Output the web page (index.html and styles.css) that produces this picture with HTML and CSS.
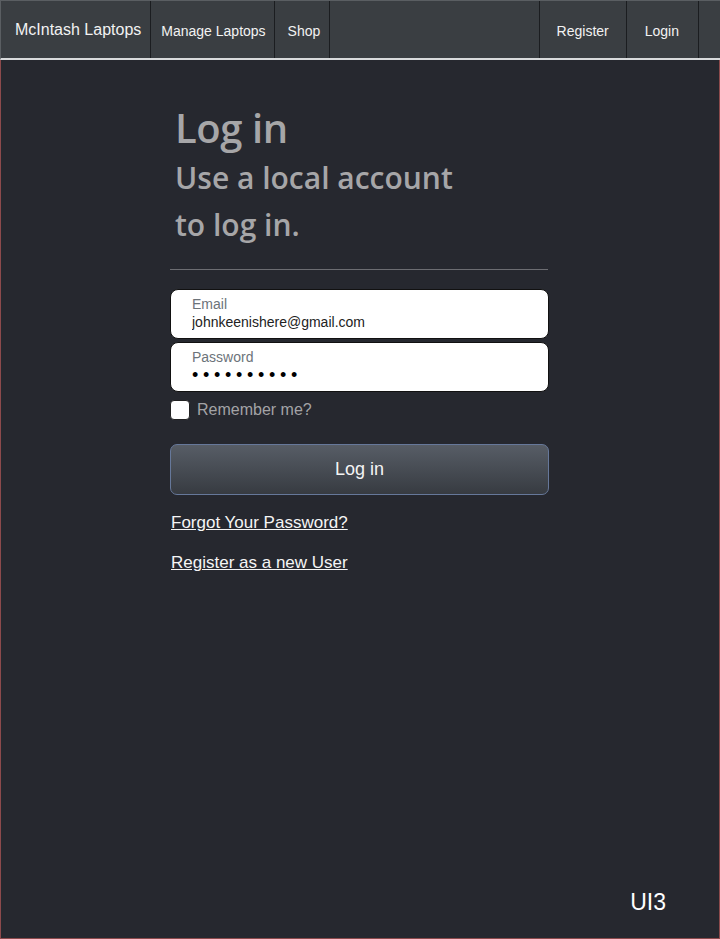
FILE: index.html
```html
<!DOCTYPE html>
<html lang="en">
<head>
<meta charset="utf-8">
<title>Log in - McIntash Laptops</title>
<link rel="stylesheet" href="styles.css">
</head>
<body>
<div class="page">
  <nav class="navbar">
    <a class="brand" href="#">McIntash Laptops</a>
    <a class="nav-item manage" href="#">Manage Laptops</a>
    <a class="nav-item shop" href="#">Shop</a>
    <span class="nav-fill"></span>
    <a class="nav-item right" href="#">Register</a>
    <a class="nav-item right login-link" href="#">Login</a>
    <span class="nav-end"></span>
  </nav>
  <main class="main">
    <section class="login">
      <h1 class="title">Log in</h1>
      <h2 class="subtitle">Use a local account<br>to log in.</h2>
      <hr class="rule">
      <form class="form">
        <label class="field">
          <span class="field-label">Email</span>
          <input class="field-input" type="email" value="johnkeenishere@gmail.com">
        </label>
        <label class="field">
          <span class="field-label">Password</span>
          <input class="field-input pw" type="password" value="0123456789">
        </label>
        <label class="check">
          <input class="check-box" type="checkbox">
          <span class="check-label">Remember me?</span>
        </label>
        <button class="btn" type="button">Log in</button>
        <div class="links">
          <a href="#" class="link">Forgot Your Password?</a>
          <a href="#" class="link">Register as a new User</a>
        </div>
      </form>
    </section>
  </main>
  <footer class="footer">UI3</footer>
</div>
</body>
</html>
```
FILE: styles.css
```css
* { box-sizing: border-box; }
html, body { margin: 0; padding: 0; }
body {
  background: #26282f;
  font-family: "Liberation Sans", Arial, sans-serif;
}
.page {
  width: 720px;
  height: 939px;
  display: flex;
  flex-direction: column;
  border: 1px solid #8c4a4c;
  border-top: none;
  background: #26282f;
}
.navbar {
  display: flex;
  align-items: stretch;
  height: 60px;
  background: #3a3e42;
  border-top: 1px solid #5a5e62;
  border-bottom: 2px solid #d8dadc;
  margin-left: -1px;
  margin-right: -1px;
  border-left: 1px solid #5a5e62;
}
.navbar a { color: #f2f2f2; text-decoration: none; }
.brand {
  display: flex;
  align-items: center;
  padding: 1px 9px 0 14px;
  font-size: 16px;
  border-right: 1px solid #1b1d20;
}
.nav-item {
  display: flex;
  align-items: center;
  font-size: 14px;
  padding: 2px 9px 0 10px;
  border-right: 1px solid #1b1d20;
}
.nav-item.manage { padding-right: 8px; }
.nav-item.shop { padding-left: 13px; }
.nav-fill { flex: 1; border-right: 1px solid #1b1d20; }
.nav-item.right { padding-left: 17px; padding-right: 17px; }
.nav-item.login-link { padding-left: 18px; padding-right: 19px; }
.nav-end { width: 21px; }
.main {
  flex: 1;
  display: flex;
  justify-content: flex-start;
  padding-left: 169px;
}
.login {
  width: 379px;
  padding-top: 41px;
}
.title, .subtitle {
  font-family: "Open Sans", sans-serif;
  font-weight: 600;
  color: #a6a6a8;
  margin: 0;
  padding-left: 5px;
}
.title {
  font-size: 40px;
  line-height: 53px;
  letter-spacing: -0.4px;
}
.subtitle {
  font-size: 30px;
  line-height: 47px;
}
.rule {
  border: none;
  border-top: 1px solid #6c6d72;
  margin: 21px 0 19px;
  width: 378px;
}
.form { display: flex; flex-direction: column; }
.field {
  display: flex;
  flex-direction: column;
  height: 50px;
  background: #fff;
  border: 1px solid #111;
  border-radius: 8px;
  padding: 6px 21px 0;
  margin-bottom: 3px;
}
.field-label {
  font-size: 14px;
  color: #6c737a;
  line-height: 16px;
}
.field-input {
  border: none;
  outline: none;
  padding: 0;
  margin: 1px 0 0;
  font-family: "Liberation Sans", Arial, sans-serif;
  font-size: 14px;
  color: #222;
  background: transparent;
  height: 17px;
}
.field-input.pw {
  -webkit-text-security: square;
  font-size: 18px;
  letter-spacing: 4.7px;
  margin-top: 0;
  height: 20px;
  color: #000;
}
.check {
  display: flex;
  align-items: center;
  gap: 7px;
  margin-top: 5px;
}
.check-box {
  appearance: none;
  -webkit-appearance: none;
  width: 20px;
  height: 20px;
  margin: 0;
  background: #fff;
  border: 1px solid #222;
  border-radius: 4px;
}
.check-label {
  font-size: 16px;
  color: #a3a3a6;
}
.btn {
  margin-top: 24px;
  height: 51px;
  width: 379px;
  border-radius: 7px;
  border: 1px solid #66789a;
  background: linear-gradient(#575d66, #373b41);
  color: #f4f4f4;
  font-family: "Liberation Sans", Arial, sans-serif;
  font-size: 18px;
}
.links {
  display: flex;
  flex-direction: column;
  gap: 20px;
  margin-top: 18px;
  padding-left: 1px;
}
.link {
  color: #f5f5f5;
  font-size: 17px;
  line-height: 20px;
  text-decoration: underline;
  align-self: flex-start;
}
.footer {
  display: flex;
  justify-content: flex-end;
  padding: 0 53px 22px 0;
  color: #ffffff;
  font-size: 23px;
}
```
